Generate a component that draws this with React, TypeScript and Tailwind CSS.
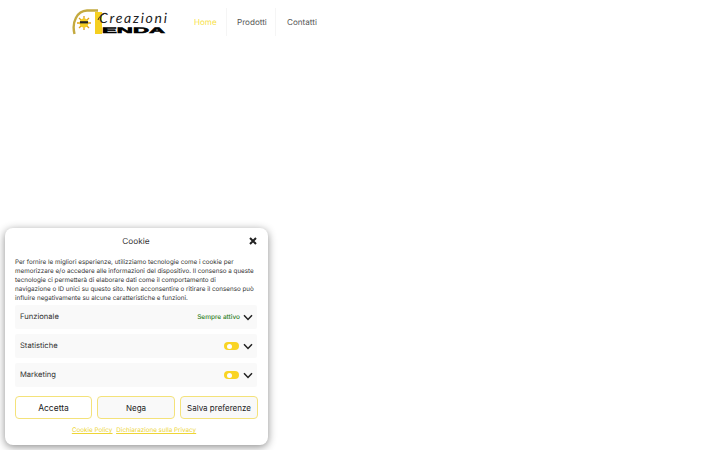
import React from "react";

function Chevron() {
  return (
    <svg width="10" height="7" viewBox="0 0 10 7" className="mt-[1px] shrink-0">
      <path d="M1 1.2 L5 5.4 L9 1.2" fill="none" stroke="#222" strokeWidth="1.5" />
    </svg>
  );
}

function Toggle() {
  return (
    <span className="flex h-[8px] w-[15px] items-center rounded-full bg-[#f9d423] pl-[3px]">
      <span className="h-[5px] w-[5px] rounded-full bg-white" />
    </span>
  );
}

function Row({ label, right }: { label: string; right: React.ReactNode }) {
  return (
    <div className="flex h-[24px] items-center justify-between rounded-[2px] bg-[#f9f9f9] pl-[5px] pr-[4px]">
      <span className="mb-[1px] text-[7.6px] leading-[10px] text-[#333]">{label}</span>
      <div className="flex items-center gap-[4px]">
        {right}
        <Chevron />
      </div>
    </div>
  );
}

function Btn({ label, bg, w, size }: { label: string; bg: string; w: string; size: string }) {
  return (
    <button className={`flex h-[23px] items-center justify-center whitespace-nowrap rounded-[4px] border border-[#f4e27a] leading-[12px] text-[#222] ${size} ${w} ${bg}`}>
      {label}
    </button>
  );
}

function Logo() {
  return (
    <svg width="96" height="28" viewBox="0 0 96 28" className="block">
      <path d="M2.5 26 C-0.5 14 5 3 15 2.5 L26 2.5" fill="none" stroke="#c4aa40" strokeWidth="2.4" />
      <rect x="23" y="4" width="7" height="22" fill="#f5cf1f" />
      <g stroke="#e0a41a" strokeWidth="1.3">
        <path d="M12 8 V22 M5 15 H19 M7 10 L17 20 M17 10 L7 20" />
      </g>
      <circle cx="12" cy="15" r="4.5" fill="#f4cd22" />
      <rect x="8" y="13.2" width="8" height="2.2" fill="#222" />
      <path d="M26 12 C27 9 29 7 32 6" fill="none" stroke="#111" strokeWidth="0.8" />
      <text x="27" y="15" fontFamily="'Lato', sans-serif" fontStyle="italic" fontWeight="400" fontSize="14" fill="#222" textLength="68" lengthAdjust="spacing">Creazioni</text>
      <text x="30" y="25" fontFamily="'Liberation Sans', sans-serif" fontWeight="700" fontSize="8" fill="#000" stroke="#000" strokeWidth="0.5" textLength="63" lengthAdjust="spacingAndGlyphs">ENDA</text>
    </svg>
  );
}

export default function App() {
  return (
    <div className="relative h-[450px] w-[720px] overflow-hidden bg-white font-['Inter',sans-serif] antialiased [text-rendering:geometricPrecision]">
      <header className="flex h-[44px] items-center pl-[72px]">
        <Logo />
        <nav className="ml-[16px] flex h-[28px] items-center text-[8.1px]">
          <a className="flex h-full w-[43px] items-center border-r border-[#f5f5f5] pl-[10px] text-[#f7df4a]">Home</a>
          <a className="flex h-full w-[49px] items-center border-r border-[#f5f5f5] pl-[10px] text-[#555]">Prodotti</a>
          <a className="flex h-full items-center pl-[11px] text-[#555]">Contatti</a>
        </nav>
      </header>

      <div className="absolute left-[5px] top-[228px] flex h-[217px] w-[263px] flex-col rounded-[8px] bg-white pl-[10px] pr-[11px] shadow-[0_2px_8px_rgba(0,0,0,0.45)]">
        <div className="relative flex h-[20px] items-end justify-center">
          <span className="text-[8.3px] leading-[12px] text-[#333]">Cookie</span>
          <svg width="8" height="8" viewBox="0 0 8 8" className="absolute right-0 bottom-[3px]">
            <path d="M1 1 L7 7 M7 1 L1 7" stroke="#222" strokeWidth="2" />
          </svg>
        </div>
        <p className="mt-[9.5px] whitespace-nowrap text-[6.28px] leading-[9px] text-[#333]">
          Per fornire le migliori esperienze, utilizziamo tecnologie come i cookie per<br />
          memorizzare e/o accedere alle informazioni del dispositivo. Il consenso a queste<br />
          tecnologie ci permetterà di elaborare dati come il comportamento di<br />
          navigazione o ID unici su questo sito. Non acconsentire o ritirare il consenso può<br />
          influire negativamente su alcune caratteristiche e funzioni.
        </p>
        <div className="mt-[2.5px] flex flex-col gap-[5px]">
          <Row label="Funzionale" right={<span className="mr-[-1px] mt-[2px] text-[6.5px] font-medium text-[#2e7d1e]">Sempre attivo</span>} />
          <Row label="Statistiche" right={<Toggle />} />
          <Row label="Marketing" right={<Toggle />} />
        </div>
        <div className="mr-[-1px] mt-[9px] flex justify-between">
          <Btn label="Accetta" bg="bg-white" w="w-[77px]" size="text-[8.5px]" />
          <Btn label="Nega" bg="bg-[#f9f9f9]" w="w-[78px]" size="text-[8px]" />
          <Btn label="Salva preferenze" bg="bg-[#f9f9f9]" w="w-[78px]" size="text-[8px]" />
        </div>
        <div className="mt-[7px] flex justify-center gap-[4px] pr-[4px] text-[6.3px] text-[#eed535] underline">
          <a>Cookie Policy</a>
          <a>Dichiarazione sulla Privacy</a>
        </div>
      </div>
    </div>
  );
}
